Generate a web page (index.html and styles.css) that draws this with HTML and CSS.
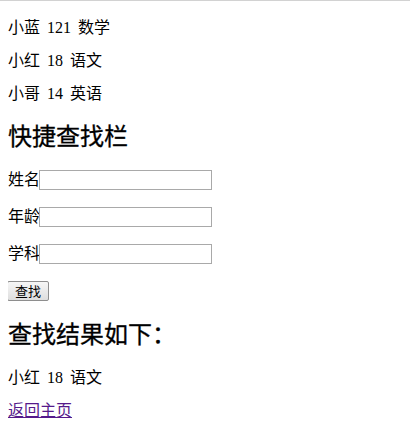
FILE: index.html
```html
<!DOCTYPE html>
<html lang="zh-CN">
<head>
    <meta charset="UTF-8">
    <title>学生查找</title>
    <link rel="stylesheet" href="styles.css">
</head>
<body>
    <p class="row first">小蓝 121 数学</p>
    <p class="row">小红 18 语文</p>
    <p class="row">小哥 14 英语</p>

    <h2>快捷查找栏</h2>
    <form class="search" onsubmit="return false;">
        <p class="field">姓名<input type="text" name="name"></p>
        <p class="field">年龄<input type="text" name="age"></p>
        <p class="field">学科<input type="text" name="subject"></p>
        <p class="field"><button type="submit">查找</button></p>
    </form>

    <h2 class="result-title">查找结果如下：</h2>
    <p class="row">小红 18 语文</p>
    <p class="last"><a href="#" class="back">返回主页</a></p>
</body>
</html>
```

FILE: styles.css
```css
html {
    border-top: 1px solid #d2d2d2;
}
body {
    margin: 0 8px 8px;
    font-family: "Liberation Serif", "Noto Sans CJK SC", serif;
    font-size: 16px;
    color: #000;
    background: #fff;
}
p {
    margin: 15px 0;
    line-height: 18px;
}
.first {
    margin-top: 18px;
}
.last {
    margin-top: 12px;
}
.row {
    word-spacing: 3px;
}
h2 {
    font-family: "Noto Sans CJK SC", sans-serif;
    font-size: 24px;
    font-weight: normal;
    line-height: 28px;
    margin: 18px 0 20px;
    -webkit-text-stroke: 0.3px #000;
}
.result-title {
    margin-bottom: 22px;
}
.search {
    margin: 0;
}
.field {
    margin: 16px 0;
    line-height: 21px;
    height: 21px;
    display: flex;
    align-items: center;
}
.field input {
    width: 173px;
    height: 20px;
    box-sizing: border-box;
    border: 1px solid #a9a9a9;
    padding: 1px 2px;
    margin: 0 0 0 -1px;
    font-size: 13px;
}
.field button {
    margin: 0 0 0 -1px;
    width: 42px;
    height: 20px;
    padding: 0;
    font-family: "Noto Sans CJK SC", sans-serif;
    font-size: 13px;
    line-height: 18px;
    border: 1px solid #8e8e8e;
    border-radius: 2px;
    background: linear-gradient(#f6f6f6, #dedede);
    color: #000;
}
.back {
    color: #551a8b;
}
```
